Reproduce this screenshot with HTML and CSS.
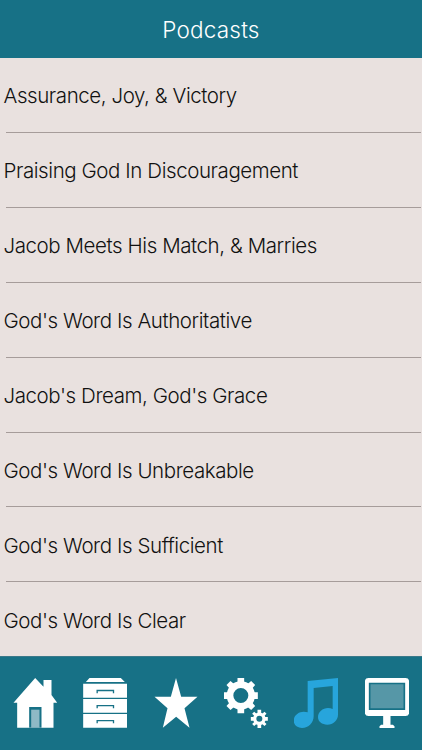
FILE: index.html
```html
<!DOCTYPE html>
<html lang="en">
<head>
  <meta charset="UTF-8">
  <meta name="viewport" content="width=device-width, initial-scale=1.0">
  <title>Podcasts</title>
  <link rel="stylesheet" href="styles.css">
</head>
<body>
  <header class="header">
    <h1 class="title">Podcasts</h1>
  </header>

  <main class="podcast-list">
    <a class="podcast">Assurance, Joy, &amp; Victory</a>
    <a class="podcast">Praising God In Discouragement</a>
    <a class="podcast">Jacob Meets His Match, &amp; Marries</a>
    <a class="podcast">God's Word Is Authoritative</a>
    <a class="podcast">Jacob's Dream, God's Grace</a>
    <a class="podcast">God's Word Is Unbreakable</a>
    <a class="podcast">God's Word Is Sufficient</a>
    <a class="podcast">God's Word Is Clear</a>
  </main>

  <nav class="tab-bar">
    <!-- Home -->
    <a class="tab">
      <svg class="icon" viewBox="39.5 66 132 150">
        <path d="M106 66L131 92V72H155V117L172 140H161V215H52V140H41Z"/>
        <path class="cutout" d="M88 153H125V215H88Z"/>
        <path class="glass" d="M94 161H119V215H94Z"/>
      </svg>
    </a>
    <!-- Archive -->
    <a class="tab">
      <svg class="icon" viewBox="250.5 66 132 150">
        <path d="M270 66H364L376 78H259Z"/>
        <path d="M251 83H383V125H251ZM251 129H383V170H251ZM251 174H383V215H251Z"/>
        <path class="handle" d="M293 112V103.500H342V112M293 157V149H342V157M293 202V194H342V202"/>
      </svg>
    </a>
    <!-- Favorites -->
    <a class="tab">
      <svg class="icon" viewBox="38.500 66 132 150">
        <path d="M104.500 66L120 122H169L130 157L145 215L105 182L65 215L79 157L40 122H89Z"/>
      </svg>
    </a>
    <!-- Settings -->
    <a class="tab">
      <svg class="icon" viewBox="249.5 66 132 150">
        <circle class="ring" cx="300" cy="118.500" r="32.500"/>
        <path d="M290 66H310V82H290ZM290 156H310V172H290ZM249 109H264V129H249ZM336 109H351V129H336Z"/>
        <path d="M257 87L269 75L284 88L270 102ZM343 87L331 75L316 88L330 102ZM257 150L269 162L284 149L270 135ZM343 150L331 162L316 149L330 135Z"/>
        <circle class="ring-small" cx="355.500" cy="188.500" r="14"/>
        <path d="M350 161H361V171H350ZM350 206H361V216H350ZM330 183H339V194H330ZM372 183H381V194H372ZM334 173L340 167L347 173L341 180ZM377 173L371 167L364 173L370 180ZM334 204L340 210L347 204L341 197ZM377 204L371 210L364 204L370 197Z"/>
      </svg>
    </a>
    <!-- Podcasts -->
    <a class="tab active">
      <svg class="icon" viewBox="40 66 132 150">
        <path d="M81 75L172 66V176C172 192 158 206 140 206C124 206 112 197 112 183C112 168 126 156 142 156C147 156 152 157 156 159V90L99 96V181C99 200 84 216 64 216C50 216 39 207 39 194C39 179 53 167 69 167C74 167 78 168 81 169Z"/>
      </svg>
    </a>
    <!-- Videos -->
    <a class="tab">
      <svg class="icon" viewBox="250.5 66 132 150">
        <rect x="250" y="66" width="133" height="114" rx="11"/>
        <path d="M305 178H327V206H334L339 211V216H294V211L299 206H305Z"/>
        <path class="cutout" d="M262 80H371V162H262Z"/>
        <path class="screen" d="M267 85H366V157H267Z"/>
      </svg>
    </a>
  </nav>
</body>
</html>
```
FILE: styles.css
```css
* {
  box-sizing: border-box;
  margin: 0;
  padding: 0;
}

body {
  height: 100vh;
  display: flex;
  flex-direction: column;
  overflow: hidden;
  background-color: #e9e1df;
  font-family: Inter, "Liberation Sans", sans-serif;
  font-weight: 300;
  color: #111;
}

.header {
  height: 58px;
  flex: none;
  display: flex;
  justify-content: center;
  align-items: center;
  padding-top: 1px;
  background-color: #177186;
  color: #fff;
}

.title {
  font-size: 22.5px;
  font-weight: 300;
  line-height: 28px;
  letter-spacing: 0.2px;
}

.podcast-list {
  flex: 1;
  min-height: 0;
  display: flex;
  flex-direction: column;
}

.podcast {
  flex: none;
  height: 74.91px;
  margin: 0 1px 0 6px;
  padding-top: 2px;
  border-bottom: 1px solid #a69c9a;
  display: flex;
  align-items: center;
  font-size: 20.5px;
  letter-spacing: -0.42px;
  text-indent: -2.5px;
  white-space: nowrap;
}

.podcast:last-child {
  border-bottom: none;
}

.tab-bar {
  height: 94px;
  flex: none;
  display: grid;
  grid-template-columns: repeat(6, 1fr);
  align-items: center;
  justify-items: center;
  padding-bottom: 1px;
  background-color: #177186;
  border-top: 1px solid #3a7889;
}

.tab {
  display: flex;
  color: #fff;
}

.tab.active {
  color: #27a5dc;
}

.icon {
  width: 44px;
  height: 50px;
  fill: currentColor;
}

.cutout {
  fill: #177186;
}

.glass {
  fill: #8fb9c6;
}

.screen {
  fill: #5697a7;
}

.handle {
  fill: none;
  stroke: #177186;
  stroke-width: 4;
}

.ring {
  fill: none;
  stroke: currentColor;
  stroke-width: 20;
}

.ring-small {
  fill: none;
  stroke: currentColor;
  stroke-width: 10;
}
```
